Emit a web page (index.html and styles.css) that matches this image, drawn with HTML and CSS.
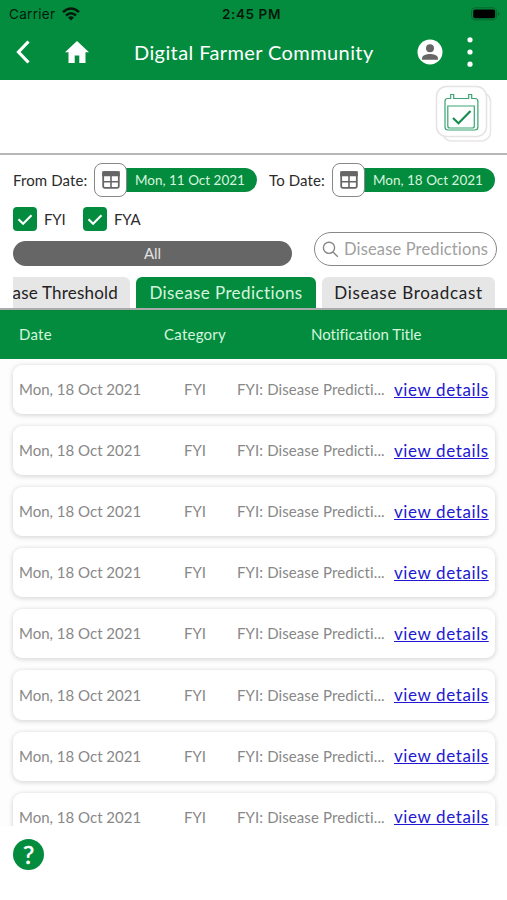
FILE: index.html
```html
<!DOCTYPE html>
<html lang="en">
<head>
<meta charset="utf-8">
<title>Digital Farmer Community</title>
<link rel="stylesheet" href="styles.css">
</head>
<body>
<header class="top">
  <div class="status">
    <div class="carrier"><span>Carrier</span>
      <svg width="18" height="14" viewBox="0 0 18 14"><g fill="none" stroke="#03190c" stroke-width="2.5"><path d="M1 5.2Q9-2.2 17 5.2"/><path d="M4 8.500Q9 4 14 8.500"/></g><path d="M6 10.400Q9 8 12 10.400L9 13.600Z" fill="#03190c"/></svg>
    </div>
    <div class="clock">2:45 PM</div>
    <div class="battery"><svg width="29" height="14" viewBox="0 0 29 14"><rect x=".6" y=".8" width="25" height="12" rx="3.5" fill="none" stroke="#07652e"/><rect x="2.2" y="2.5" width="22" height="8.8" rx="2" fill="#000"/><path d="M27 5v4q1.500-.6 1.500-2T27 5" fill="#07652e"/></svg></div>
  </div>
  <div class="nav">
    <svg class="back" width="16" height="24" viewBox="0 0 16 24"><path d="M13.500 1.500L3.500 12l10 10.500" fill="none" stroke="#fff" stroke-width="3.200"/></svg>
    <svg class="home" width="26" height="24" viewBox="0 0 26 24"><path d="M13 1L1 12.200h3.500V23h6.200v-7.500h4.600V23h6.200V12.200H25Z" fill="#fff"/></svg>
    <h1>Digital Farmer Community</h1>
    <svg class="user" width="26" height="26" viewBox="0 0 26 26"><circle cx="13" cy="13" r="12.500" fill="#fff"/><circle cx="13" cy="9.300" r="4" fill="#666"/><path d="M5 20.800v-1.500c0-3 5-4.300 8-4.300s8 1.300 8 4.300v1.500Z" fill="#666"/></svg>
    <svg class="more" width="6" height="32" viewBox="0 0 6 32"><g fill="#fff"><circle cx="3" cy="3.800" r="2.600"/><circle cx="3" cy="16" r="2.600"/><circle cx="3" cy="28.200" r="2.600"/></g></svg>
  </div>
</header>
<section class="toolbar">
  <svg width="58" height="58" viewBox="0 0 58 58"><rect x="7.500" y="7.500" width="48" height="48.500" rx="9" fill="#fff" stroke="#e8e5e7" stroke-width="1.500"/><rect x="1.500" y="1.500" width="50" height="50" rx="10" fill="#fff" stroke="#e5e2e4" stroke-width="1.500"/><g fill="none" stroke="#3aa572" stroke-width="1.200"><path d="M12.500 13.500h3.200V9.500h3v4h15v-4h3v4h3.200q3 0 3 3V42q0 3-3 3H13q-3 0-3-3V16.500q0-3 2.500-3Z"/><path d="M12.800 21h26.500V41q0 2-2 2H14.800q-2 0-2-2Z"/></g><path d="M18 33l5.500 5.200L35.500 26" fill="none" stroke="#188c51" stroke-width="2.200"/></svg>
</section>
<section class="filters">
  <div class="dates">
    <span class="from">From Date:</span>
    <div class="cal"><svg width="18" height="18" viewBox="0 0 18 18"><rect x="1.200" y="1.200" width="15.600" height="15.600" rx="1.500" fill="none" stroke="#666" stroke-width="1.800"/><path d="M1 1h16v3.500H1ZM9 4v13M1 10.800h16" fill="#666" stroke="#666" stroke-width="1.600"/></svg></div>
    <div class="pill">Mon, 11 Oct 2021</div>
    <span class="to">To Date:</span>
    <div class="cal"><svg width="18" height="18" viewBox="0 0 18 18"><rect x="1.200" y="1.200" width="15.600" height="15.600" rx="1.500" fill="none" stroke="#666" stroke-width="1.800"/><path d="M1 1h16v3.500H1ZM9 4v13M1 10.800h16" fill="#666" stroke="#666" stroke-width="1.600"/></svg></div>
    <div class="pill">Mon, 18 Oct 2021</div>
  </div>
  <div class="options">
    <div class="kinds">
      <div class="checks">
        <div class="check"><svg width="24" height="24" viewBox="0 0 24 24"><path d="M5.500 12.200l4.600 4.500 8.400-8.500" fill="none" stroke="#fff" stroke-width="2.200"/></svg></div><span class="fyi">FYI</span>
        <div class="check"><svg width="24" height="24" viewBox="0 0 24 24"><path d="M5.500 12.200l4.600 4.500 8.400-8.500" fill="none" stroke="#fff" stroke-width="2.200"/></svg></div><span>FYA</span>
      </div>
      <div class="all">All</div>
    </div>
    <div class="search"><svg width="17" height="17" viewBox="0 0 17 17"><g fill="none" stroke="#858585" stroke-width="1.400"><circle cx="7" cy="6.800" r="5.600"/><path d="M11 11l4.800 4.800"/></g></svg><span>Disease Predictions</span></div>
  </div>
</section>
<nav class="tabs">
  <div class="tab first"><span>ase Threshold</span></div>
  <div class="tab active"><span>Disease Predictions</span></div>
  <div class="tab last"><span>Disease Broadcast</span></div>
</nav>
<div class="thead"><span>Date</span><span>Category</span><span class="ntitle">Notification Title</span></div>
<main class="list">
  <article class="card"><span class="date">Mon, 18 Oct 2021</span><span class="cat">FYI</span><span class="title">FYI: Disease Predicti...</span><a>view details</a></article>
  <article class="card"><span class="date">Mon, 18 Oct 2021</span><span class="cat">FYI</span><span class="title">FYI: Disease Predicti...</span><a>view details</a></article>
  <article class="card"><span class="date">Mon, 18 Oct 2021</span><span class="cat">FYI</span><span class="title">FYI: Disease Predicti...</span><a>view details</a></article>
  <article class="card"><span class="date">Mon, 18 Oct 2021</span><span class="cat">FYI</span><span class="title">FYI: Disease Predicti...</span><a>view details</a></article>
  <article class="card"><span class="date">Mon, 18 Oct 2021</span><span class="cat">FYI</span><span class="title">FYI: Disease Predicti...</span><a>view details</a></article>
  <article class="card"><span class="date">Mon, 18 Oct 2021</span><span class="cat">FYI</span><span class="title">FYI: Disease Predicti...</span><a>view details</a></article>
  <article class="card"><span class="date">Mon, 18 Oct 2021</span><span class="cat">FYI</span><span class="title">FYI: Disease Predicti...</span><a>view details</a></article>
  <article class="card"><span class="date">Mon, 18 Oct 2021</span><span class="cat">FYI</span><span class="title">FYI: Disease Predicti...</span><a>view details</a></article>
</main>
<footer><div class="help">?</div></footer>
</body>
</html>
```
FILE: styles.css
```css
* { box-sizing: border-box; }
body { margin: 0; width: 507px; height: 900px; overflow: hidden; background: #fff; font-family: Lato, sans-serif; font-variant-ligatures: none; color: #2b2b2b; white-space: nowrap; }
svg { display: block; flex: none; }
.top { height: 80px; background: #038c3e; }
.status { height: 27px; display: grid; grid-template-columns: 1fr 80px 1fr; align-items: center; padding: 0 7px 0 9px; font: 13.5px Inter, sans-serif; color: #03190c; }
.carrier { display: flex; align-items: center; gap: 7px; letter-spacing: .3px; }
.clock { text-align: center; font-weight: 600; font-size: 13.5px; letter-spacing: .6px; padding-right: 2px; margin: 0 2px 0 -2px; }
.battery { justify-self: end; }
.nav { height: 50px; display: flex; align-items: center; color: #fff; padding-left: 15px; }
.home { margin-left: 33px; }
h1 { margin: 0 0 0 44px; width: 240px; font-size: 20px; font-weight: 400; letter-spacing: .4px; padding-bottom: 1px; }
.user { margin-left: 43px; }
.more { margin-left: 24px; }
.toolbar { height: 75px; border-bottom: 2px solid #b7b7b7; display: flex; justify-content: flex-end; padding: 5px 14px 0 0; }
.filters { height: 122px; padding: 7px 10px 0 13px; }
.dates { height: 35px; display: flex; align-items: center; font-size: 15px; letter-spacing: .1px; }
.from { width: 81px; }
.to { width: 75px; padding-left: 12px; }
.cal { width: 33px; height: 34px; border: 1.5px solid #888; border-radius: 8px; background: #fff; display: grid; place-items: center; z-index: 1; }
.pill { width: 132px; height: 24px; margin-left: -2px; background: #038c3e; border-radius: 0 12px 12px 0; color: #d8f4df; font-size: 13.5px; line-height: 25px; padding-left: 10px; letter-spacing: 0; }
.options { display: flex; justify-content: space-between; align-items: flex-end; padding-top: 10px; height: 69px; }
.kinds { width: 279px; height: 59px; }
.checks { height: 24px; display: flex; align-items: center; font-size: 15px; letter-spacing: -.2px; }
.check { width: 24px; height: 24px; border-radius: 4px; background: #038c3e; margin-right: 7px; }
.fyi { width: 39px; }
.all { height: 25px; margin-top: 10px; border-radius: 13px; background: #666; color: #e2e2e2; text-align: center; font-size: 15px; line-height: 25px; }
.search { width: 183px; height: 34px; border: 1.5px solid #888; border-radius: 17px; display: flex; align-items: center; padding-left: 7px; gap: 5px; color: #a0a0a0; font-size: 16.5px; letter-spacing: .15px; }
.tabs { height: 33px; border-bottom: 2px solid #aaa; padding: 0 12px 0 13px; display: flex; gap: 6px; }
.tab { height: 31px; border-radius: 6px 6px 0 0; background: #e6e6e6; color: #222; font-size: 17px; line-height: 32px; letter-spacing: .4px; display: flex; justify-content: center; }
.first { width: 117px; border-top-left-radius: 0; justify-content: flex-end; overflow: hidden; padding-right: 12px; letter-spacing: .2px; }
.active { width: 180px; background: #038c3e; color: #d5f5dd; }
.last { width: 173px; letter-spacing: .7px; }
.thead { height: 49px; background: #038c3e; color: #d5f5dd; display: grid; grid-template-columns: 145px 147px 1fr; align-items: center; padding: 0 0 1px 19px; font-size: 15px; letter-spacing: .25px; }
.ntitle { letter-spacing: 0; }
.list { height: 467px; overflow: hidden; padding: 6px 12px 0 13px; display: flex; flex-direction: column; gap: 12px; background: #fdfdfd; }
.card { height: 49.1px; flex: none; border-radius: 9px; background: #fff; box-shadow: 0 1px 4px 1px #0002; display: grid; grid-template-columns: 165px 53px 157px 1fr; align-items: center; padding: 0 0 1px 6px; color: #888; font-size: 15px; }
.title { letter-spacing: .1px; }
.card a { color: #2117d2; font-size: 17px; letter-spacing: .6px; text-decoration: underline; text-decoration-thickness: 1px; }
footer { height: 74px; padding: 13px; }
.help { width: 31px; height: 31px; border-radius: 50%; background: #038c3e; color: #fff; font-size: 25px; line-height: 31px; text-align: center; font-weight: 400; -webkit-text-stroke: .5px #fff; }
```
